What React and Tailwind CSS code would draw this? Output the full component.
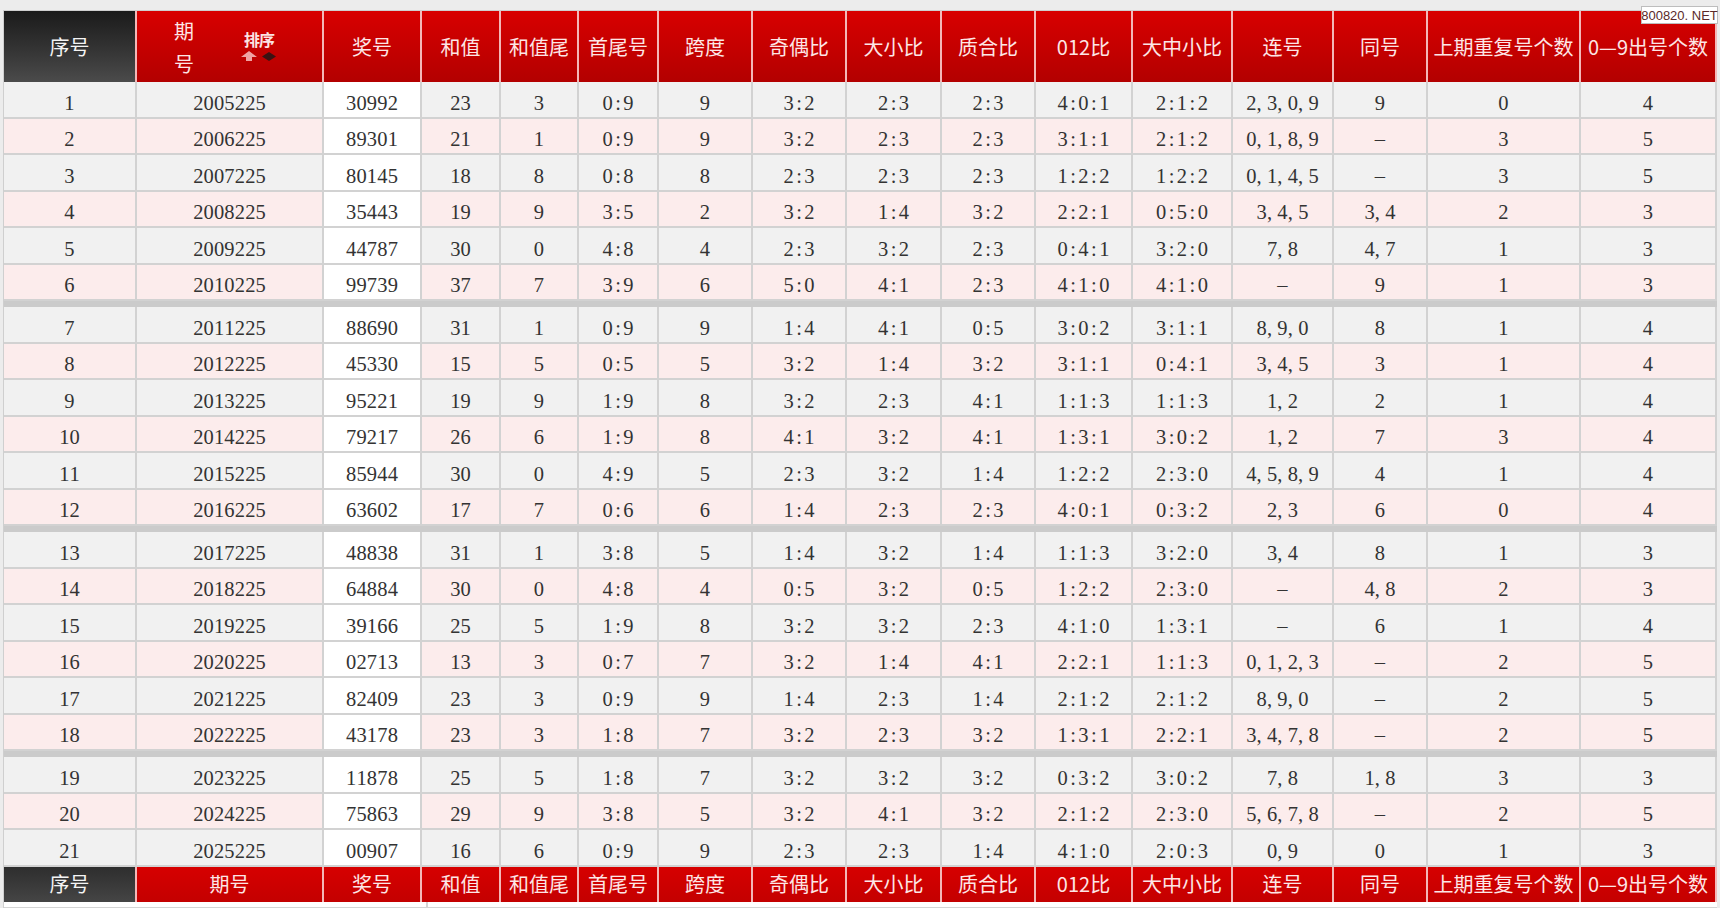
import React from 'react';

const COLS =
  'grid grid-cols-[133px_187px_98px_79px_78px_80px_94px_94px_95px_94px_97px_100px_101px_94px_153px_136px]';

const HEADS = [
  '序号', '期号', '奖号', '和值', '和值尾', '首尾号', '跨度', '奇偶比', '大小比',
  '质合比', '012比', '大中小比', '连号', '同号', '上期重复号个数', '0—9出号个数',
];

// 开奖数据
const ROWS = [
  [1, 2005225, '30992', 23, 3, '0:9', 9, '3:2', '2:3', '2:3', '4:0:1', '2:1:2', '2,3,0,9', '9', 0, 4],
  [2, 2006225, '89301', 21, 1, '0:9', 9, '3:2', '2:3', '2:3', '3:1:1', '2:1:2', '0,1,8,9', '–', 3, 5],
  [3, 2007225, '80145', 18, 8, '0:8', 8, '2:3', '2:3', '2:3', '1:2:2', '1:2:2', '0,1,4,5', '–', 3, 5],
  [4, 2008225, '35443', 19, 9, '3:5', 2, '3:2', '1:4', '3:2', '2:2:1', '0:5:0', '3,4,5', '3,4', 2, 3],
  [5, 2009225, '44787', 30, 0, '4:8', 4, '2:3', '3:2', '2:3', '0:4:1', '3:2:0', '7,8', '4,7', 1, 3],
  [6, 2010225, '99739', 37, 7, '3:9', 6, '5:0', '4:1', '2:3', '4:1:0', '4:1:0', '–', '9', 1, 3],
  [7, 2011225, '88690', 31, 1, '0:9', 9, '1:4', '4:1', '0:5', '3:0:2', '3:1:1', '8,9,0', '8', 1, 4],
  [8, 2012225, '45330', 15, 5, '0:5', 5, '3:2', '1:4', '3:2', '3:1:1', '0:4:1', '3,4,5', '3', 1, 4],
  [9, 2013225, '95221', 19, 9, '1:9', 8, '3:2', '2:3', '4:1', '1:1:3', '1:1:3', '1,2', '2', 1, 4],
  [10, 2014225, '79217', 26, 6, '1:9', 8, '4:1', '3:2', '4:1', '1:3:1', '3:0:2', '1,2', '7', 3, 4],
  [11, 2015225, '85944', 30, 0, '4:9', 5, '2:3', '3:2', '1:4', '1:2:2', '2:3:0', '4,5,8,9', '4', 1, 4],
  [12, 2016225, '63602', 17, 7, '0:6', 6, '1:4', '2:3', '2:3', '4:0:1', '0:3:2', '2,3', '6', 0, 4],
  [13, 2017225, '48838', 31, 1, '3:8', 5, '1:4', '3:2', '1:4', '1:1:3', '3:2:0', '3,4', '8', 1, 3],
  [14, 2018225, '64884', 30, 0, '4:8', 4, '0:5', '3:2', '0:5', '1:2:2', '2:3:0', '–', '4,8', 2, 3],
  [15, 2019225, '39166', 25, 5, '1:9', 8, '3:2', '3:2', '2:3', '4:1:0', '1:3:1', '–', '6', 1, 4],
  [16, 2020225, '02713', 13, 3, '0:7', 7, '3:2', '1:4', '4:1', '2:2:1', '1:1:3', '0,1,2,3', '–', 2, 5],
  [17, 2021225, '82409', 23, 3, '0:9', 9, '1:4', '2:3', '1:4', '2:1:2', '2:1:2', '8,9,0', '–', 2, 5],
  [18, 2022225, '43178', 23, 3, '1:8', 7, '3:2', '2:3', '3:2', '1:3:1', '2:2:1', '3,4,7,8', '–', 2, 5],
  [19, 2023225, '11878', 25, 5, '1:8', 7, '3:2', '3:2', '3:2', '0:3:2', '3:0:2', '7,8', '1,8', 3, 3],
  [20, 2024225, '75863', 29, 9, '3:8', 5, '3:2', '4:1', '3:2', '2:1:2', '2:3:0', '5,6,7,8', '–', 2, 5],
  [21, 2025225, '00907', 16, 6, '0:9', 9, '2:3', '2:3', '1:4', '4:1:0', '2:0:3', '0,9', '0', 1, 3],
];

// 半角等宽，模仿宋体数字
function Mono({ text }) {
  return (
    <span className="inline-flex">
      {String(text).split('').map((ch, i) => (
        <span key={i} className={`inline-block w-[10.4px] ${ch === ',' ? 'text-left' : 'text-center'}`}>
          {ch}
        </span>
      ))}
    </span>
  );
}

function SortIcon() {
  return (
    <div className="flex flex-col items-center">
      <span className="text-[16px] font-bold leading-none text-[#fbe3e3] tracking-[-1px]">排序</span>
      <svg width="36" height="11" viewBox="0 0 36 11" className="mt-[4px]">
        <polygon points="8,0 16,6 11,6 11,10 5,10 5,6 0,6" fill="#efa3a3" />
        <polygon points="28,1 35,5.5 28,10 21,5.5" fill="#3b1212" />
      </svg>
    </div>
  );
}

function HeaderRow() {
  return (
    <div className={`${COLS} h-[71px] font-['Noto_Sans_CJK_SC',sans-serif] text-[20px] text-[#fde6e6]`}>
      {HEADS.map((h, i) => {
        if (i === 0) {
          return (
            <div key={i} className="flex items-center justify-center border-r-2 border-[#f3b8b8] bg-linear-to-b from-[#1b1b1b] to-[#4b4b4b] text-[#f4f4f4]">
              {h}
            </div>
          );
        }
        if (i === 1) {
          return (
            <div key={i} className="flex items-center pl-[37px] gap-[47px] border-r-2 border-[#f3b8b8] bg-linear-to-b from-[#d80000] to-[#b30000]">
              <div className="w-[20px] leading-[33px] flex flex-col">
                <span>期</span>
                <span>号</span>
              </div>
              <SortIcon />
            </div>
          );
        }
        return (
          <div key={i} className="flex items-center justify-center whitespace-nowrap border-r-2 border-[#f3b8b8] bg-linear-to-b from-[#d80000] to-[#b30000]">
            {h}
          </div>
        );
      })}
    </div>
  );
}

function DataRow({ row, idx }) {
  const bg = idx % 2 === 0 ? 'bg-[#f1f1f1]' : 'bg-[#fcecec]';
  return (
    <div className={`${COLS} h-[36.5px] overflow-hidden font-['Liberation_Serif',serif] text-[20.5px] leading-[24px] text-[#333]`}>
      {row.map((v, i) => (
        <div
          key={i}
          className={`flex items-center justify-center pt-[7px] border-r-2 border-b-2 border-[#d2d2d2] ${i === 2 ? 'bg-white' : bg}`}
        >
          <Mono text={v} />
        </div>
      ))}
    </div>
  );
}

function FooterRow() {
  return (
    <div className={`${COLS} h-[35px] font-['Noto_Sans_CJK_SC',sans-serif] text-[20px] leading-none text-[#fde6e6]`}>
      {HEADS.map((h, i) => (
        <div
          key={i}
          className={`flex items-center justify-center whitespace-nowrap border-r-2 border-[#f3b8b8] ${
            i === 0 ? 'bg-linear-to-b from-[#2e2e2e] to-[#454545] text-[#f4f4f4]' : 'bg-linear-to-b from-[#d60000] to-[#c40000]'
          }`}
        >
          {h}
        </div>
      ))}
    </div>
  );
}

export default function App() {
  const groups = [ROWS.slice(0, 6), ROWS.slice(6, 12), ROWS.slice(12, 18), ROWS.slice(18)];

  return (
    <div className="relative w-[1720px] h-[908px] overflow-hidden bg-[#ececec] pt-[10px] pl-[3px]">
      <div className="w-[1714px] border-l border-t border-[#cfcfcf]">
        <HeaderRow />
        {groups.map((g, gi) => (
          <React.Fragment key={gi}>
            {g.map((r, ri) => (
              <DataRow key={r[0]} row={r} idx={gi * 6 + ri} />
            ))}
            {gi < 3 && <div className="h-[6px] bg-[#cbcbcb]" />}
          </React.Fragment>
        ))}
        <FooterRow />
        <div className="flex h-[7px] bg-white border-b-2 border-[#d4d4d4]">
          <div className="w-[424px] border-r-2 border-[#d4d4d4]" />
        </div>
      </div>

      {/* 水印 */}
      <div className="absolute left-[1641px] top-[6px] h-[18px] w-[77px] flex items-center justify-center whitespace-nowrap bg-white border border-[#bdbdbd] font-['Liberation_Sans',sans-serif] text-[13px] leading-none text-[#5b2a2a]">
        800820. NET
      </div>
    </div>
  );
}
